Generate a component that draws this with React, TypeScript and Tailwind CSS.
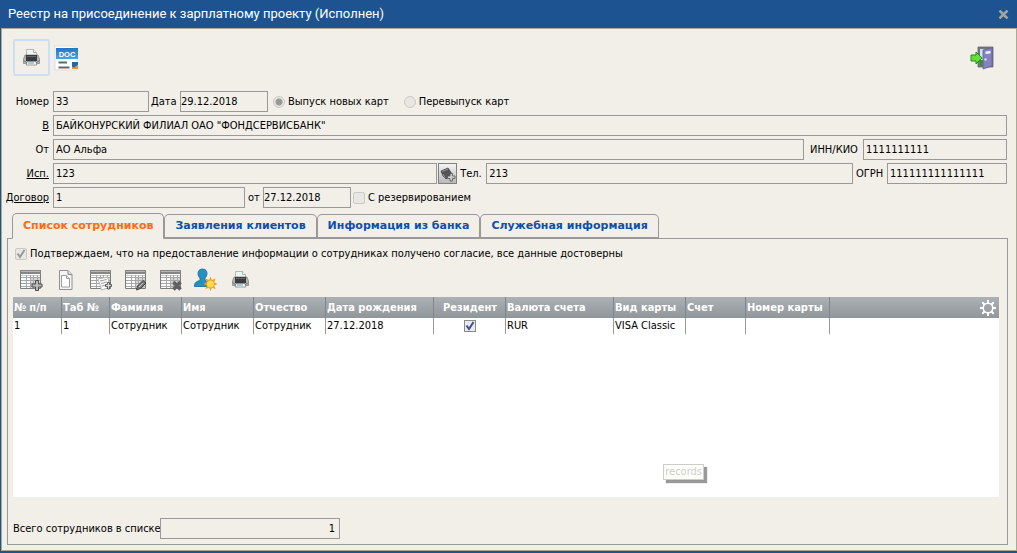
import { useState, type InputHTMLAttributes, type ReactNode } from "react";
import clsx from "clsx";

const TABS = [
    "Список сотрудников",
    "Заявления клиентов",
    "Информация из банка",
    "Служебная информация",
];

const COLUMNS = [
    { title: "№ п/п", width: "w-[48px]" },
    { title: "Таб №", width: "w-[48px]" },
    { title: "Фамилия", width: "w-[72px]" },
    { title: "Имя", width: "w-[72px]" },
    { title: "Отчество", width: "w-[72px]" },
    { title: "Дата рождения", width: "w-[108px]" },
    { title: "Резидент", width: "w-[72px]" },
    { title: "Валюта счета", width: "w-[108px]" },
    { title: "Вид карты", width: "w-[72px]" },
    { title: "Счет", width: "w-[60px]" },
    { title: "Номер карты", width: "w-[84px]" },
];

const ROWS = [
    ["1", "1", "Сотрудник", "Сотрудник", "Сотрудник", "27.12.2018", true, "RUR", "VISA Classic", "", ""],
];

function PrinterIcon() {
    return (
        <svg width="24" height="24" viewBox="0 0 24 24">
            <path d="M6.500 3.500h7l3 3v5h-10z" fill="#eef3f3" stroke="#a3abab" strokeWidth=".8" />
            <path d="M13.500 3.500v3h3" fill="#fff" stroke="#8e9696" strokeWidth=".7" />
            <path d="M5 9h13l1.500 4v4.500h-16V13z" fill="#b3b3b3" stroke="#808080" strokeWidth=".7" />
            <path d="M6 9h11v6H6z" fill="#3b3b3b" />
            <path d="M7 10.500h9" stroke="#666" />
            <path d="M4 14.500l2 2h11l2-2" stroke="#666" fill="none" />
            <path d="M7 15.500h9l.8 3.500H6.200z" fill="#f8f8f8" stroke="#777" strokeWidth=".7" />
            <path d="M8 17h6" stroke="#4ca2bd" />
        </svg>
    );
}

function DocIcon() {
    return (
        <svg width="26" height="26" viewBox="0 0 26 26">
            <defs>
                <linearGradient id="doc" x1="0" y1="0" x2="0" y2="1">
                    <stop offset="0" stopColor="#2177c6" />
                    <stop offset="1" stopColor="#43a3ed" />
                </linearGradient>
            </defs>
            <path d="M0 1h19l4 3v21H1V2z" fill="#fff" stroke="#d4d4d4" strokeWidth=".7" />
            <path d="M2 3h22v11H2z" fill="url(#doc)" />
            <text x="13" y="11.500" textAnchor="middle" fontSize="7.500" fontWeight="bold" fill="#fff" fontFamily="Liberation Sans, sans-serif">DOC</text>
            <path d="M4.500 17.500h8.500M4.500 22.500h11" stroke="#666" strokeWidth="1.800" />
            <path d="M18 17h6v7h-6z" fill="#1c68ad" />
            <path d="M18 21.500l2 1 4-3v4.500h-6z" fill="#ea9136" />
        </svg>
    );
}

function ExitIcon() {
    return (
        <svg width="24" height="24" viewBox="0 0 24 24">
            <path d="M8 1h15v20H8z" fill="#777785" stroke="#62626e" strokeWidth=".8" />
            <path d="M10 3h5v17h-5z" fill="#c6e6f5" />
            <path d="M10 14h5v6h-5z" fill="#36952c" />
            <path d="M13 4l9-2v18l-9 3z" fill="#8583bd" stroke="#6461a0" strokeWidth=".8" />
            <path d="M15.500 5.500l5-.8v2.800l-5 .6z" fill="#e9efff" />
            <circle cx="15.500" cy="13.500" r="1.200" fill="#dedede" />
            <path d="M1 9h5V6l6 6-6 6v-3H1z" fill="#64df35" stroke="#238b20" />
        </svg>
    );
}

function SheetIcon({ children }: { children?: ReactNode }) {
    return (
        <svg width="24" height="24" viewBox="0 0 24 24">
            <path d="M1.500 2.500h20v18h-20z" fill="#fdfdfd" stroke="#7c7c7c" />
            <path d="M12 10h9v10h-9z" fill="#d5d5d5" />
            <path d="M1 2h21v4H1z" fill="#858585" />
            <path d="M2 3.500h19" stroke="#b5b5b5" />
            <path d="M2 7.500h19" stroke="#c9c9c9" />
            <path d="M7.500 7v13M11.500 7v13M14.500 7v13M18.500 7v13M2 9.500h19M2 12.500h19M2 15.500h19M2 18.500h19" stroke="#a6a6a6" />
            {children}
        </svg>
    );
}

function PageIcon() {
    return (
        <svg width="24" height="24" viewBox="0 0 24 24">
            <path d="M5.500 2.500h8.500l4 4v15h-12.500z" fill="#f4f4f4" stroke="#929292" />
            <path d="M14 2.500v4h4" fill="#ddd" stroke="#8a8a8a" />
            <path d="M7.500 7.500h5l3 3v8.500h-8z" fill="#fff" stroke="#9c9c9c" />
            <path d="M12.500 7.500v3h3" fill="#e2e2e2" stroke="#9c9c9c" />
        </svg>
    );
}

function UserIcon() {
    return (
        <svg width="24" height="24" viewBox="0 0 24 24">
            <path d="M8.500 1c3 0 4.500 2 4.500 4.500 0 2-1 3.500-2 4.500v2c2 1 4 2 5 4v2.500H.5V17c.5-3 3-4 5.500-4.500v-2.500C4.500 8.500 4 7 4 5.500 4 3 5.500 1 8.500 1z" fill="#258fc0" stroke="#0b6c98" strokeWidth=".8" />
            <path d="M16.500 8.500l1.400 3.600 3.700-1.500-1.500 3.700 3.400 1.600-3.400 1.500 1.500 3.700-3.700-1.400-1.400 3.300-1.400-3.300-3.700 1.400 1.500-3.700-3.400-1.500 3.400-1.600-1.500-3.700 3.700 1.500z" fill="#f0a01c" />
            <circle cx="16.500" cy="16" r="3.500" fill="#ffd84e" />
        </svg>
    );
}

const ACTIONS = [
    {
        title: "Добавить",
        icon: (
            <SheetIcon>
                <path d="M16.500 12.500h3V16H23v3h-3.500v3.500h-3V19H13v-3h3.500z" fill="#bbb" stroke="#4d4d4d" />
            </SheetIcon>
        ),
    },
    { title: "Создать", icon: <PageIcon /> },
    {
        title: "Копировать",
        icon: (
            <SheetIcon>
                <path d="M9 11l9.500-2 3 10-9 3z" fill="#fff" stroke="#b5b5b5" />
                <path d="M11 13l6.500-1.500M12 15.500l6-1.500M12.500 18l5-1" stroke="#999" />
                <path d="M18.500 14.500h2v2h2v2h-2v2.500h-2v-2.500h-2v-2h2z" fill="#ddd" stroke="#4d4d4d" strokeWidth=".9" />
            </SheetIcon>
        ),
    },
    {
        title: "Изменить",
        icon: (
            <SheetIcon>
                <path d="M12.500 22l1-4 5.500-5.500 3 2.500-5.500 5.500z" fill="#777" stroke="#444" />
                <path d="M15 19l4-4" stroke="#ccc" />
            </SheetIcon>
        ),
    },
    {
        title: "Удалить",
        icon: (
            <SheetIcon>
                <path d="M14.500 14l7 7.500M21.500 14l-7 7.500" stroke="#606060" strokeWidth="3.500" />
            </SheetIcon>
        ),
    },
    { title: "Новый сотрудник", icon: <UserIcon /> },
    { title: "Печать", icon: <PrinterIcon /> },
];

function GearIcon() {
    return (
        <svg width="18" height="18" viewBox="0 0 18 18" fill="none" stroke="#fff">
            <circle cx="9" cy="9" r="4.800" strokeWidth="1.600" />
            <path d="M9 1v3M9 14v3M1 9h3M14 9h3M3.300 3.300l2.200 2.200M12.500 12.500l2.200 2.200M3.300 14.700l2.200-2.200M12.500 5.500l2.200-2.200" strokeWidth="2" />
        </svg>
    );
}

function Field({ className, ...props }: InputHTMLAttributes<HTMLInputElement>) {
    return (
        <input
            readOnly
            className={clsx("h-[21px] min-w-0 border border-[#999] bg-[#f2efe8] outline-none", className)}
            {...props}
        />
    );
}

function CheckBox({ dark, ...props }: InputHTMLAttributes<HTMLInputElement> & { dark?: boolean }) {
    return (
        <span className="relative block size-3 shrink-0">
            <input
                type="checkbox"
                className={clsx(
                    "peer block size-3 appearance-none border",
                    dark ? "border-[#8a8a8a] bg-[#e9eaf0]" : "rounded-xs border-[#cbc9c4] bg-[#e9e7e2]"
                )}
                {...props}
            />
            <svg
                className="pointer-events-none absolute inset-0 hidden peer-checked:block"
                width="12"
                height="12"
                viewBox="0 0 12 12"
                fill="none"
                stroke={dark ? "#3d4f94" : "#999"}
                strokeWidth="2"
            >
                <path d="M2.500 5.500l2.500 3.500 4.500-7" />
            </svg>
        </span>
    );
}

function Radio(props: InputHTMLAttributes<HTMLInputElement>) {
    return (
        <input
            type="radio"
            name="issue"
            disabled
            className="size-3 shrink-0 appearance-none rounded-full border border-[#cbc9c4] bg-[#e9e7e2] checked:bg-[radial-gradient(circle,#999_3px,#e9e7e2_4px)]"
            {...props}
        />
    );
}

const LABEL = "w-[47px] shrink-0 text-right";

export default function App() {
    const [tab, setTab] = useState(0);

    return (
        <div className="flex min-h-screen flex-col bg-[#1e5391] pb-0.5 pl-px font-['DejaVu_Sans_Condensed','DejaVu_Sans',sans-serif] text-[11px] leading-4 text-black [font-stretch:condensed]">
            <header className="flex h-7 shrink-0 items-center justify-between pr-2 pl-[7px] text-white">
                <h1 className="font-[Roboto,sans-serif] text-[13px] [font-stretch:normal]">Реестр на присоединение к зарплатному проекту (Исполнен)</h1>
                <button type="button" aria-label="Закрыть" className="text-[#a5a5a0]">
                    <svg width="11" height="9" viewBox="0 0 11 9" stroke="currentColor" strokeWidth="2.500">
                        <path d="M1.500.5l8 8M9.500.5l-8 8" />
                    </svg>
                </button>
            </header>

            <main className="flex flex-1 flex-col border border-[#aaa994] bg-[#f2efe8] pt-2.5 pb-[5px]">
                <div className="flex h-[37px] items-center pr-[22px] pl-[11px]">
                    <button type="button" title="Печать" className="flex size-[37px] items-center justify-center rounded-xs border-2 border-[#cfdff2]">
                        <PrinterIcon />
                    </button>
                    <button type="button" title="Экспорт в DOC" className="ml-1">
                        <DocIcon />
                    </button>
                    <button type="button" title="Выход" className="ml-auto">
                        <ExitIcon />
                    </button>
                </div>

                <form className="mt-[15px] flex flex-col gap-[3px] pr-[9px]">
                    <div className="flex items-center">
                        <label htmlFor="number" className={LABEL}>Номер</label>
                        <Field id="number" defaultValue="33" className="ml-1 w-24 pl-0.5" />
                        <label htmlFor="date" className="ml-0.5 w-[29px]">Дата</label>
                        <Field id="date" defaultValue="29.12.2018" className="w-[88px]" />
                        <label className="ml-[5px] flex items-center gap-[3px]">
                            <Radio defaultChecked />
                            Выпуск новых карт
                        </label>
                        <label className="ml-[15px] flex items-center gap-[3px]">
                            <Radio />
                            Перевыпуск карт
                        </label>
                    </div>
                    <div className="flex items-center">
                        <label htmlFor="bank" className={clsx(LABEL, "underline")}>В</label>
                        <Field id="bank" defaultValue={'БАЙКОНУРСКИЙ ФИЛИАЛ ОАО "ФОНДСЕРВИСБАНК"'} className="ml-1 flex-1 pl-0.5" />
                    </div>
                    <div className="flex items-center">
                        <label htmlFor="from" className={LABEL}>От</label>
                        <Field id="from" defaultValue="АО Альфа" className="ml-1 flex-1 pl-0.5" />
                        <label htmlFor="inn" className="w-[59px] pl-1.5">ИНН/КИО</label>
                        <Field id="inn" defaultValue="1111111111" className="w-36 pl-0.5" />
                    </div>
                    <div className="flex items-center">
                        <label htmlFor="executor" className={clsx(LABEL, "underline")}>Исп.</label>
                        <Field id="executor" defaultValue="123" className="ml-1 flex-[22] pl-0.5" />
                        <button type="button" title="Справочник" className="ml-px flex h-[21px] w-[19px] items-center justify-center border border-[#808080] bg-linear-to-b from-[#f4f4f4] to-[#b9b9b9]">
                            <svg width="16" height="16" viewBox="0 0 16 16">
                                <path d="M1 5l7-3 4 6-6 5-3-3z" fill="#555" stroke="#333" strokeWidth=".7" />
                                <path d="M2 5.500l6-2.500M3 8l2 4" stroke="#999" />
                                <path d="M10 7.500h2.500V10H15v2.500h-2.500V15H10v-2.500H7.500V10H10z" fill="#ccc" stroke="#555" strokeWidth=".8" />
                            </svg>
                        </button>
                        <label htmlFor="phone" className="w-[29px] shrink-0 pl-[3px]">Тел.</label>
                        <Field id="phone" defaultValue="213" className="flex-[21] pl-0.5" />
                        <label htmlFor="ogrn" className="w-[34px] shrink-0 pl-[3px]">ОГРН</label>
                        <Field id="ogrn" defaultValue="111111111111111" className="w-[120px] pl-0.5" />
                    </div>
                    <div className="flex items-center">
                        <label htmlFor="contract" className={clsx(LABEL, "underline")}>Договор</label>
                        <Field id="contract" defaultValue="1" className="ml-1 w-48 pl-0.5" />
                        <label htmlFor="contract-date" className="w-[18px] pl-[3px]">от</label>
                        <Field id="contract-date" defaultValue="27.12.2018" className="w-[88px]" />
                        <label className="ml-0.5 flex items-center gap-[3px]">
                            <CheckBox disabled />
                            С резервированием
                        </label>
                    </div>
                </form>

                <div role="tablist" className="z-10 mt-[5px] -mb-px ml-[10px] flex items-end font-['DejaVu_Sans',sans-serif] font-bold [font-stretch:normal]">
                    {TABS.map((title, i) => (
                        <button
                            key={title}
                            type="button"
                            role="tab"
                            aria-selected={tab === i}
                            onClick={() => setTab(i)}
                            className={clsx(
                                "rounded-t-[5px] border border-[#999] px-[10px]",
                                tab === i
                                    ? "h-[26px] border-b-[#f2efe8] bg-[#f2efe8] text-[#ff6a13]"
                                    : "h-[25px] border-b-2 text-[#0e4fa9]"
                            )}
                        >
                            {title}
                        </button>
                    ))}
                </div>

                <section className="mr-2 ml-[5px] flex flex-1 flex-col border border-[#999] pt-[7px] pr-2 pb-[5px] pl-[5px]">
                    <label className="flex items-center gap-[3px] pl-0.5">
                        <CheckBox disabled defaultChecked />
                        Подтверждаем, что на предоставление информации о сотрудниках получено согласие, все данные достоверны
                    </label>
                    <div className="mt-1.5 flex">
                        {ACTIONS.map((action) => (
                            <button key={action.title} type="button" title={action.title} className="flex h-6 w-[35px] items-center justify-center">
                                {action.icon}
                            </button>
                        ))}
                    </div>

                    <div className="relative mt-[5px] flex-1 bg-white">
                        <table className="w-full table-fixed border-separate border-spacing-0">
                            <thead>
                                <tr className="h-[21px] bg-linear-to-b from-[#abb1b4] to-[#90969a] text-white">
                                    {COLUMNS.map((col, i) => (
                                        <th
                                            key={col.title}
                                            className={clsx(
                                                "p-0 pl-px font-bold whitespace-nowrap",
                                                col.width,
                                                i > 0 && "border-l border-[#80868a]",
                                                i === 6 ? "text-center" : "text-left"
                                            )}
                                        >
                                            {col.title}
                                        </th>
                                    ))}
                                    <th className="border-l border-[#80868a] p-0 pr-0.5">
                                        <button type="button" aria-label="Настройка" className="ml-auto block">
                                            <GearIcon />
                                        </button>
                                    </th>
                                </tr>
                            </thead>
                            <tbody>
                                {ROWS.map((row) => (
                                    <tr key={String(row[0])} className="h-4">
                                        {row.map((cell, i) => (
                                            <td key={i} className={clsx("p-0 pl-px whitespace-nowrap", i > 0 && "border-l border-[#999]")}>
                                                {typeof cell === "boolean" ? (
                                                    <div className="flex justify-center">
                                                        <CheckBox dark defaultChecked={cell} aria-label="Резидент" />
                                                    </div>
                                                ) : (
                                                    cell
                                                )}
                                            </td>
                                        ))}
                                        <td className="border-l border-[#999] p-0" />
                                    </tr>
                                ))}
                            </tbody>
                        </table>
                        <div role="tooltip" className="absolute right-[295px] bottom-[17px] border border-[#ccc] bg-[#fffffa] px-px leading-[14px] text-[#ccc] shadow-[3px_3px_1px_#999]">
                            records
                        </div>
                    </div>

                    <div className="mt-[21px] flex items-center">
                        <label htmlFor="total" className="w-[147px] whitespace-nowrap">Всего сотрудников в списке</label>
                        <Field id="total" defaultValue="1" className="w-[180px] pr-1 text-right" />
                    </div>
                </section>
            </main>
        </div>
    );
}
